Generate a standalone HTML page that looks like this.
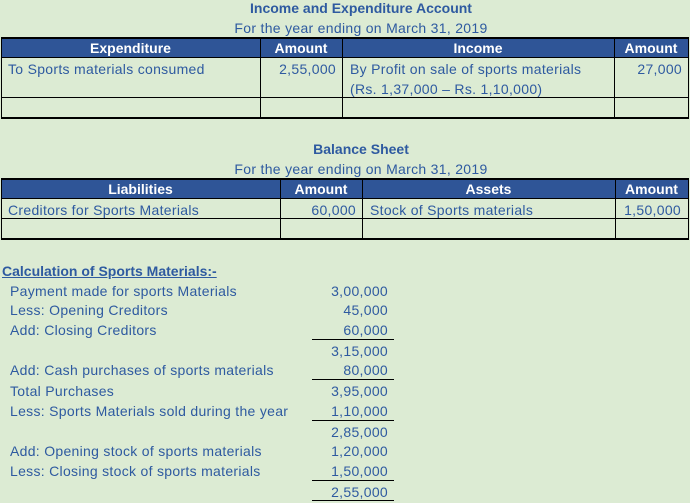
<!DOCTYPE html><html><head><style>
body{margin:0;width:690px;height:503px;background:#dcebd3;font-family:"Liberation Sans",sans-serif;color:#2e5aa0;position:relative;overflow:hidden;font-size:14px;letter-spacing:0.3px}
.a{position:absolute;white-space:nowrap;line-height:16px}
.c{text-align:center}
.r{text-align:right}
.b{font-weight:bold;letter-spacing:0}
.hdr{position:absolute;background:#2f5597;color:#fff;font-weight:bold}
.ln{position:absolute;background:#000}
.ul{position:absolute;height:1px;background:#000;left:312px;width:82px}
</style></head><body>
<div class="a b c" style="left:0;width:722px;top:0">Income and Expenditure Account</div>
<div class="a c" style="left:0;width:722px;top:20px">For the year ending on March 31, 2019</div>
<div class="hdr" style="left:1px;top:37px;width:687px;height:20px"></div>
<div class="ln" style="left:1px;top:37px;width:688px;height:2px"></div>
<div class="ln" style="left:1px;top:57px;width:688px;height:1px"></div>
<div class="ln" style="left:1px;top:97px;width:688px;height:1px"></div>
<div class="ln" style="left:1px;top:117px;width:688px;height:2px"></div>
<div class="ln" style="left:1px;top:37px;width:1px;height:82px"></div>
<div class="ln" style="left:260px;top:37px;width:1px;height:82px"></div>
<div class="ln" style="left:342px;top:37px;width:1px;height:82px"></div>
<div class="ln" style="left:614px;top:37px;width:1px;height:82px"></div>
<div class="ln" style="left:688px;top:37px;width:1px;height:82px"></div>
<div class="a b c" style="color:#fff;left:1px;width:259px;top:40px">Expenditure</div>
<div class="a b c" style="color:#fff;left:260px;width:82px;top:40px">Amount</div>
<div class="a b c" style="color:#fff;left:342px;width:272px;top:40px">Income</div>
<div class="a b c" style="color:#fff;left:614px;width:74px;top:40px">Amount</div>
<div class="a" style="left:8px;top:61px">To Sports materials consumed</div>
<div class="a r" style="left:260px;width:76px;top:61px">2,55,000</div>
<div class="a" style="left:350px;top:61px">By Profit on sale of sports materials</div>
<div class="a" style="left:350px;top:81px">(Rs. 1,37,000 – Rs. 1,10,000)</div>
<div class="a r" style="left:614px;width:68px;top:61px">27,000</div>

<div class="a b c" style="left:0;width:722px;top:141px">Balance Sheet</div>
<div class="a c" style="left:0;width:722px;top:161px">For the year ending on March 31, 2019</div>
<div class="hdr" style="left:1px;top:178px;width:687px;height:20px"></div>
<div class="ln" style="left:1px;top:178px;width:688px;height:2px"></div>
<div class="ln" style="left:1px;top:198px;width:688px;height:1px"></div>
<div class="ln" style="left:1px;top:218px;width:688px;height:1px"></div>
<div class="ln" style="left:1px;top:238px;width:688px;height:2px"></div>
<div class="ln" style="left:1px;top:178px;width:1px;height:62px"></div>
<div class="ln" style="left:280px;top:178px;width:1px;height:62px"></div>
<div class="ln" style="left:362px;top:178px;width:1px;height:62px"></div>
<div class="ln" style="left:615px;top:178px;width:1px;height:62px"></div>
<div class="ln" style="left:688px;top:178px;width:1px;height:62px"></div>
<div class="a b c" style="color:#fff;left:1px;width:279px;top:181px">Liabilities</div>
<div class="a b c" style="color:#fff;left:280px;width:82px;top:181px">Amount</div>
<div class="a b c" style="color:#fff;left:362px;width:253px;top:181px">Assets</div>
<div class="a b c" style="color:#fff;left:615px;width:73px;top:181px">Amount</div>
<div class="a" style="left:8px;top:202px">Creditors for Sports Materials</div>
<div class="a r" style="left:280px;width:76px;top:202px">60,000</div>
<div class="a" style="left:370px;top:202px">Stock of Sports materials</div>
<div class="a r" style="left:615px;width:66px;top:202px">1,50,000</div>

<div class="a b" style="left:2px;top:263px;text-decoration:underline">Calculation of Sports Materials:-</div>
<div class="a" style="left:10px;top:283px">Payment made for sports Materials</div>
<div class="a" style="left:10px;top:302px">Less: Opening Creditors</div>
<div class="a" style="left:10px;top:322px">Add: Closing Creditors</div>
<div class="a" style="left:10px;top:362px">Add: Cash purchases of sports materials</div>
<div class="a" style="left:10px;top:383px">Total Purchases</div>
<div class="a" style="left:10px;top:403px">Less: Sports Materials sold during the year</div>
<div class="a" style="left:10px;top:443px">Add: Opening stock of sports materials</div>
<div class="a" style="left:10px;top:463px">Less: Closing stock  of sports materials</div>
<div class="a r" style="left:300px;width:88px;top:283px">3,00,000</div>
<div class="a r" style="left:300px;width:88px;top:302px">45,000</div>
<div class="a r" style="left:300px;width:88px;top:322px">60,000</div>
<div class="a r" style="left:300px;width:88px;top:343px">3,15,000</div>
<div class="a r" style="left:300px;width:88px;top:362px">80,000</div>
<div class="a r" style="left:300px;width:88px;top:383px">3,95,000</div>
<div class="a r" style="left:300px;width:88px;top:403px">1,10,000</div>
<div class="a r" style="left:300px;width:88px;top:424px">2,85,000</div>
<div class="a r" style="left:300px;width:88px;top:443px">1,20,000</div>
<div class="a r" style="left:300px;width:88px;top:463px">1,50,000</div>
<div class="a r" style="left:300px;width:88px;top:484px">2,55,000</div>
<div class="ul" style="top:339px"></div>
<div class="ul" style="top:379px"></div>
<div class="ul" style="top:420px"></div>
<div class="ul" style="top:480px"></div>
<div class="ul" style="top:500px"></div>
</body></html>
